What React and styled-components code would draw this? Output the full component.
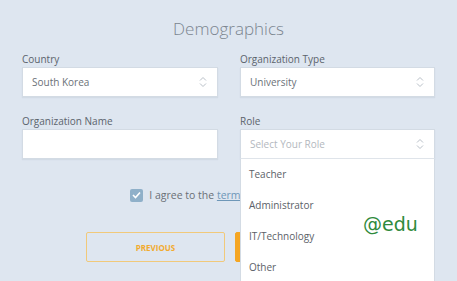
import React, { Component } from "react";
import styled, { createGlobalStyle } from "styled-components";

const GlobalStyle = createGlobalStyle`
  html, body {
    margin: 0;
    padding: 0;
    background: #dee6f0;
    font-family: "Open Sans", "Liberation Sans", sans-serif;
    overflow: hidden;
  }
`;

const Page = styled.div`
  position: relative;
  width: 457px;
  height: 281px;
  padding: 17px 22px 0;
  box-sizing: border-box;
  background: #dee6f0;
  overflow: hidden;
`;

const Title = styled.h2`
  margin: 0 0 12px;
  font-size: 17px;
  line-height: 24px;
  font-weight: 300;
  color: #7b858f;
  text-align: center;
`;

const Grid = styled.div`
  display: grid;
  grid-template-columns: 196px 195px;
  column-gap: 22px;
  row-gap: 18px;
`;

const Field = styled.div`
  position: relative;
  display: flex;
  flex-direction: column;
  gap: 2px;
`;

const Label = styled.label`
  font-size: 10px;
  line-height: 12px;
  color: #5b636c;
`;

const Box = styled.div`
  height: 30px;
  box-sizing: border-box;
  display: flex;
  align-items: center;
  justify-content: space-between;
  padding: 0 10px 0 9px;
  background: #fff;
  border: 1px solid #d3dbe4;
  box-shadow: 0 1px 1px rgba(120, 140, 160, 0.12);
  font-size: 10px;
  color: ${props => (props.placeholder ? "#b3b8be" : "#6b7178")};
  border-bottom-color: ${props => (props.open ? "#dfe4ea" : "#d3dbe4")};
`;

const Menu = styled.ul`
  position: absolute;
  top: 100%;
  left: 0;
  right: 0;
  margin: 0;
  padding: 0;
  list-style: none;
  background: #fff;
  border: 1px solid #d3dbe4;
  border-top: none;
  z-index: 2;
`;

const MenuItem = styled.li`
  height: 31px;
  display: flex;
  align-items: center;
  padding-left: 8px;
  font-size: 10px;
  color: #5b6168;
  &:first-child {
    margin-top: -1px;
  }
`;

const AgreeRow = styled.div`
  display: flex;
  justify-content: center;
  align-items: center;
  gap: 6px;
  margin-top: 29px;
  padding-right: 6px;
  font-size: 10.5px;
  color: #6a7077;
`;

const Check = styled.span`
  width: 13px;
  height: 13px;
  border-radius: 2px;
  background: #8fb0c9;
  display: flex;
  align-items: center;
  justify-content: center;
`;

const TermsLink = styled.a`
  color: #6e97b8;
  text-decoration: underline;
`;

const Buttons = styled.div`
  display: flex;
  justify-content: center;
  gap: 10px;
  margin-top: 30px;
  padding-left: 3px;
`;

const Btn = styled.button`
  width: 139px;
  height: 30px;
  border-radius: 2px;
  font-family: "Open Sans", "Liberation Sans", sans-serif;
  font-size: 8px;
  font-weight: 700;
  text-transform: uppercase;
  border: 1px solid ${props => (props.primary ? "#f5a623" : "#f1c97a")};
  background: ${props => (props.primary ? "#f5a623" : "transparent")};
  color: ${props => (props.primary ? "#fff" : "#f2ab2e")};
`;

const Watermark = styled.div`
  position: absolute;
  left: 363px;
  top: 213px;
  font-family: "DejaVu Sans", Verdana, sans-serif;
  font-size: 19px;
  color: #2f8a3c;
  z-index: 3;
`;

const Chevrons = () => (
  <svg width="8" height="12" viewBox="0 0 8 12" fill="none" stroke="#b9c0c8" strokeWidth="1">
    <path d="M1 4.5 L4 1.5 L7 4.5" />
    <path d="M1 7.5 L4 10.5 L7 7.5" />
  </svg>
);

const Select = ({ value, placeholder, open }) => (
  <Box placeholder={placeholder ? 1 : undefined} open={open}>
    <span>{value || placeholder}</span>
    <Chevrons />
  </Box>
);

const roles = ["Teacher", "Administrator", "IT/Technology", "Other"];

class App extends Component {
  render() {
    return (
      <Page>
        <GlobalStyle />
        <Title>Demographics</Title>
        <Grid>
          <Field>
            <Label>Country</Label>
            <Select value="South Korea" />
          </Field>
          <Field>
            <Label>Organization Type</Label>
            <Select value="University" />
          </Field>
          <Field>
            <Label>Organization Name</Label>
            <Box />
          </Field>
          <Field>
            <Label>Role</Label>
            <div style={{ position: "relative" }}>
              <Select placeholder="Select Your Role" open />
              <Menu>
                {roles.map(r => (
                  <MenuItem key={r}>{r}</MenuItem>
                ))}
              </Menu>
            </div>
          </Field>
        </Grid>
        <AgreeRow>
          <Check>
            <svg width="9" height="8" viewBox="0 0 9 8" fill="none" stroke="#fff" strokeWidth="1.6">
              <path d="M1 4 L3.5 6.5 L8 1.5" />
            </svg>
          </Check>
          <span>
            I agree to the <TermsLink>terms</TermsLink> and conditions
          </span>
        </AgreeRow>
        <Buttons>
          <Btn>Previous</Btn>
          <Btn primary>Next</Btn>
        </Buttons>
        <Watermark>@edu</Watermark>
      </Page>
    );
  }
}

export default App;
